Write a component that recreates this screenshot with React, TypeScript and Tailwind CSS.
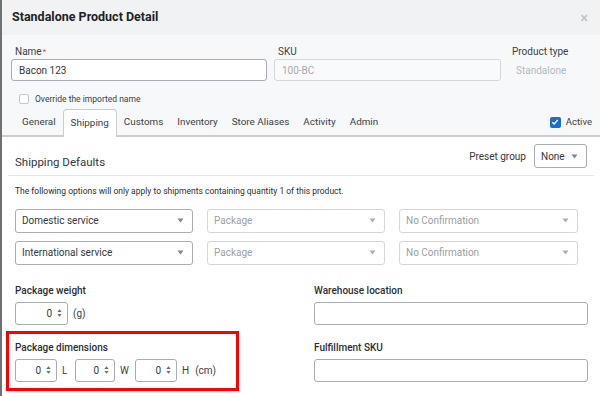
import React from "react";

const Caret = ({ light }: { light?: boolean }) => (
  <svg width="7" height="5" viewBox="0 0 7 5" className="shrink-0">
    <path d="M0.5 0.5h6L3.5 4.5z" fill={light ? "#a9adb3" : "#80858b"} />
  </svg>
);

const Spinner = () => (
  <svg width="5" height="10" viewBox="0 0 5 10" className="shrink-0">
    <path d="M0.3 4L2.5 1.2L4.7 4z" fill="#6b7076" />
    <path d="M0.3 6L2.5 8.8L4.7 6z" fill="#6b7076" />
  </svg>
);

const Select = ({ label, disabled }: { label: string; disabled?: boolean }) => (
  <div
    className={`h-[24px] rounded-[3px] border flex items-center justify-between pl-[6px] pr-[8px] bg-white ${
      disabled ? "border-[#d3d6da] text-[#9a9fa5]" : "border-[#a8adb4] text-[#33373c]"
    }`}
  >
    <span className="text-[10px]">{label}</span>
    <Caret light={disabled} />
  </div>
);

const NumberBox = ({ w }: { w: string }) => (
  <div className={`${w} h-[23px] rounded-[3px] border border-[#a8adb4] bg-white flex items-center justify-end gap-[5px] pr-[5px]`}>
    <span className="text-[10px] text-[#33373c]">0</span>
    <Spinner />
  </div>
);

const tabs = ["General", "Shipping", "Customs", "Inventory", "Store Aliases", "Activity", "Admin"];

export default function App() {
  return (
    <div className="w-[600px] h-[396px] overflow-hidden flex bg-white" style={{ fontFamily: "Roboto, 'Liberation Sans', sans-serif" }}>
      <div className="w-[2px] shrink-0 bg-[#707070]" />
      <div className="flex-1 flex flex-col min-w-0">
        {/* Header */}
        <div className="h-[35px] shrink-0 bg-[#f1f2f4] flex items-center justify-between pl-[10px] pr-[12px]">
          <h1 className="text-[12.5px] font-bold text-[#1f2226]">Standalone Product Detail</h1>
          <span className="text-[14px] font-bold text-[#c3c7cc] leading-none">×</span>
        </div>

        {/* Top form */}
        <div className="bg-[#f7f8fa] pt-[10px] border-b-2 border-[#c9ccd1]">
          <div className="flex pl-[9px]">
            <div className="w-[256px]">
              <div className="pl-[4px] text-[10px] text-[#3a3f45] h-[14px] leading-[14px]">
                Name<span className="text-[#e0453a] align-top text-[8px] ml-[1px]">*</span>
              </div>
              <div className="h-[22px] rounded-[3px] border border-[#a8adb4] bg-white flex items-center px-[7px] text-[10px] text-[#33373c]">
                Bacon 123
              </div>
            </div>
            <div className="w-[227px] ml-[7px]">
              <div className="pl-[4px] text-[10px] text-[#3a3f45] h-[14px] leading-[14px]">SKU</div>
              <div className="h-[22px] rounded-[3px] border border-[#d3d6da] bg-[#f9fafb] flex items-center px-[7px] text-[10px] text-[#a6abb1]">
                100-BC
              </div>
            </div>
            <div className="ml-[11px]">
              <div className="text-[10px] text-[#3a3f45] h-[14px] leading-[14px]">Product type</div>
              <div className="h-[22px] flex items-center pl-[4px] text-[10px] text-[#b4b8bd]">Standalone</div>
            </div>
          </div>

          <div className="flex items-center gap-[6px] pl-[17px] mt-[11px] h-[14px]">
            <div className="w-[10px] h-[10px] rounded-[2px] border border-[#c3c7cc] bg-white" />
            <span className="text-[8.5px] text-[#3a3f45]">Override the imported name</span>
          </div>

          <div className="flex items-end justify-between mt-[3px] pl-[13px] pr-[8px]">
            <div className="flex">
              {tabs.map((t) => (
                <div
                  key={t}
                  className={`h-[26px] px-[7px] flex items-center text-[9.9px] text-[#3a3f45] ${
                    t === "Shipping" ? "bg-white border border-b-0 border-[#c9ccd1] rounded-t-[4px] -mb-[2px] h-[28px]" : ""
                  }`}
                >
                  {t}
                </div>
              ))}
            </div>
            <div className="flex items-center gap-[5px] h-[26px]">
              <div className="w-[11px] h-[11px] rounded-[2px] bg-[#1a6fca] flex items-center justify-center">
                <svg width="8" height="8" viewBox="0 0 8 8">
                  <path d="M1.3 4.2L3.1 6L6.8 2" stroke="white" strokeWidth="1.4" fill="none" />
                </svg>
              </div>
              <span className="text-[9.5px] text-[#3a3f45]">Active</span>
            </div>
          </div>
        </div>

        {/* Shipping content */}
        <div className="flex-1 bg-white pt-[7px]">
          <div className="flex items-end justify-between pl-[13px] pr-[13px]">
            <h2 className="text-[11.5px] text-[#33373c] -mb-[3px]">Shipping Defaults</h2>
            <div className="flex items-center gap-[8px]">
              <span className="text-[10px] text-[#33373c]">Preset group</span>
              <div className="w-[53px] h-[24px] rounded-[3px] border border-[#a8adb4] flex items-center justify-between pl-[6px] pr-[8px]">
                <span className="text-[10px] text-[#33373c]">None</span>
                <Caret />
              </div>
            </div>
          </div>
          <div className="mx-[6px] mt-[7px] border-t border-[#e3e5e8]" />
          <p className="pl-[13px] mt-[9px] text-[8.5px] text-[#2b2f33]">
            The following options will only apply to shipments containing quantity 1 of this product.
          </p>

          <div className="grid grid-cols-[178px_178px_179px] gap-x-[14px] gap-y-[8px] pl-[13px] mt-[11px]">
            <Select label="Domestic service" />
            <Select label="Package" disabled />
            <Select label="No Confirmation" disabled />
            <Select label="International service" />
            <Select label="Package" disabled />
            <Select label="No Confirmation" disabled />
          </div>

          <div className="flex pl-[13px] pr-[12px] mt-[19px]">
            <div className="w-[299px] shrink-0">
              <div className="text-[10px] font-medium text-[#2b2f33] h-[14px] leading-[14px]">Package weight</div>
              <div className="flex items-center gap-[5px] mt-[4px]">
                <NumberBox w="w-[53px]" />
                <span className="text-[10px] text-[#3a3f45]">(g)</span>
              </div>

              <div className="relative mt-[16px]">
                <div className="absolute left-[-9px] top-[-10px] w-[233px] h-[60px] border-[3px] border-[#ff0000]" />
                <div className="text-[10px] font-medium text-[#2b2f33] h-[14px] leading-[14px]">Package dimensions</div>
                <div className="flex items-center mt-[4px] text-[10px] text-[#3a3f45]">
                  <NumberBox w="w-[42px]" />
                  <span className="ml-[5px] w-[13px]">L</span>
                  <NumberBox w="w-[40px]" />
                  <span className="ml-[5px] w-[15px]">W</span>
                  <NumberBox w="w-[42px]" />
                  <span className="ml-[5px]">H</span>
                  <span className="ml-[6px]">(cm)</span>
                </div>
              </div>
            </div>
            <div className="flex-1">
              <div className="text-[10px] font-medium text-[#2b2f33] h-[14px] leading-[14px]">Warehouse location</div>
              <div className="mt-[4px] h-[23px] rounded-[3px] border border-[#a8adb4] bg-white" />
              <div className="mt-[16px] text-[10px] font-medium text-[#2b2f33] h-[14px] leading-[14px]">Fulfillment SKU</div>
              <div className="mt-[4px] h-[23px] rounded-[3px] border border-[#a8adb4] bg-white" />
            </div>
          </div>
        </div>
      </div>
    </div>
  );
}
